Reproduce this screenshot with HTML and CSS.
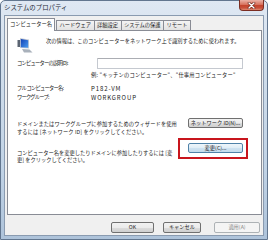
FILE: index.html
```html
<!DOCTYPE html>
<html lang="ja">
<head>
  <meta charset="UTF-8">
  <title>システムのプロパティ</title>
  <link rel="stylesheet" href="styles.css">
</head>
<body>
  <div class="window">
    <div class="titlebar">
      <span class="title">システムのプロパティ</span>
      <div class="close-btn">
        <svg width="9" height="7" viewBox="0 0 9 7">
          <path d="M2 1 L7 6 M7 1 L2 6" stroke="#6b2418" stroke-width="2.6" stroke-linecap="round"/>
          <path d="M2 1 L7 6 M7 1 L2 6" stroke="#fff" stroke-width="1.4" stroke-linecap="round"/>
        </svg>
      </div>
    </div>

    <div class="client">
      <div class="tabs">
        <div class="tab active">コンピューター名</div>
        <div class="tab">ハードウェア</div>
        <div class="tab">詳細設定</div>
        <div class="tab">システムの保護</div>
        <div class="tab">リモート</div>
      </div>

      <div class="panel">
        <div class="intro">
          <svg class="pc-icon" width="16" height="16" viewBox="0 0 16 16">
            <defs>
              <linearGradient id="scr" x1="0" y1="0" x2="1" y2="1">
                <stop offset="0" stop-color="#0f3fb5"/>
                <stop offset="1" stop-color="#4b9cf0"/>
              </linearGradient>
            </defs>
            <rect x="0.5" y="3" width="2.5" height="7" fill="#5b6472"/>
            <polygon points="3,1 12,2.5 12,11.5 3,11" fill="#c9ced6"/>
            <polygon points="3.8,1.9 11.2,3.2 11.2,10.7 3.8,10.2" fill="url(#scr)"/>
            <polygon points="5,12 12.5,12.5 15.5,15.5 7,15.5" fill="#a9b1bb"/>
          </svg>
          <p>次の情報は、このコンピューターをネットワーク上で識別するために使われます。</p>
        </div>

        <div class="field desc">
          <span class="label">コンピューターの説明(D):</span>
          <div class="textbox"></div>
        </div>
        <div class="field example">
          <span class="label"></span>
          <span class="hint">例: "キッチンのコンピューター"、"仕事用コンピューター"</span>
        </div>
        <div class="field fullname">
          <span class="label">フル コンピューター名:</span>
          <span class="value">P182-VM</span>
        </div>
        <div class="field workgroup">
          <span class="label">ワークグループ:</span>
          <span class="value">WORKGROUP</span>
        </div>

        <div class="action network">
          <p>ドメインまたはワークグループに参加するためのウィザードを使用<br>するには [ネットワーク ID] をクリックしてください。</p>
          <button class="btn">ネットワーク ID(N)...</button>
        </div>
        <div class="action change">
          <p>コンピューター名を変更したりドメインに参加したりするには [変<br>更] をクリックしてください。</p>
          <button class="btn default highlight">変更(C)...</button>
        </div>
      </div>

      <div class="footer">
        <button class="btn ok">OK</button>
        <button class="btn cancel">キャンセル</button>
        <button class="btn apply" disabled>適用(A)</button>
      </div>
    </div>
  </div>
</body>
</html>
```

FILE: styles.css
```css
* {
  box-sizing: border-box;
}

body {
  margin: 0;
  background: #fff;
  font-family: "Noto Sans CJK JP", sans-serif;
  font-size: 5.25px;
  color: #222;
}

p {
  margin: 0;
  white-space: nowrap;
}

.window {
  width: 268px;
  height: 240px;
  display: flex;
  flex-direction: column;
  padding: 0 3px 3px;
  border: 1px solid #62768f;
  border-radius: 5px 5px 0 0;
  background: linear-gradient(to bottom, #dfe8f3 0%, #d0ddeb 30%, #c1d3e6 70%, #aec3da 100%);
}

.titlebar {
  height: 14px;
  display: flex;
  align-items: flex-start;
}

.title {
  margin-top: 3px;
  font-size: 6.4px;
  line-height: 8px;
  color: #1f2a38;
}

.close-btn {
  margin: -1px 0 0 auto;
  width: 25px;
  height: 11px;
  border: 1px solid #7b2d22;
  border-top: none;
  border-radius: 0 0 4px 4px;
  background: linear-gradient(to bottom, #ebb2a6 0%, #d8735f 45%, #c3432c 52%, #c9503a 80%, #e08c73 100%);
  display: flex;
  align-items: center;
  justify-content: center;
}

.client {
  flex: 1;
  display: flex;
  flex-direction: column;
  background: #f0f0f0;
  border: 1px solid #8a9bb0;
  padding: 2px 1px 2px 2px;
}

/* tabs */
.tabs {
  display: flex;
  align-items: flex-end;
  height: 12px;
}

.tab {
  height: 10px;
  line-height: 9px;
  padding: 0 2.5px;
  margin-right: -1px;
  border: 1px solid #898c95;
  border-bottom: none;
  background: linear-gradient(to bottom, #f4f4f4, #e2e2e2);
  white-space: nowrap;
}

.tab.active {
  position: relative;
  z-index: 1;
  height: 13px;
  line-height: 11px;
  margin-bottom: -1px;
  margin-right: 1px;
  padding: 0 2px;
  background: #fff;
}

/* page */
.panel {
  flex: 1;
  background: #fff;
  border: 1px solid #898c95;
  padding: 6px 18px 0 9px;
  display: flex;
  flex-direction: column;
  line-height: 7.5px;
}

.intro {
  display: flex;
  align-items: flex-start;
  gap: 13px;
}

.intro p {
  padding-top: 1px;
}

.pc-icon {
  flex: none;
}

.field {
  display: flex;
  align-items: center;
  white-space: nowrap;
}

.label {
  width: 74px;
  flex: none;
  letter-spacing: -0.75px;
}

.desc {
  margin-top: 5px;
}

.textbox {
  margin-left: 6px;
  width: 146px;
  height: 11px;
  background: #fff;
  border: 1px solid #c5c9d0;
  border-top-color: #abadb3;
  border-radius: 1px;
}

.example {
  margin-top: 3px;
}

.hint {
  letter-spacing: 0.2px;
}

.fullname {
  margin-top: 5px;
}

.workgroup {
  margin-top: 1.5px;
}

.value {
  font-size: 6px;
  letter-spacing: 0.9px;
}

.action {
  display: flex;
  align-items: flex-start;
  justify-content: space-between;
}

.action.network {
  margin-top: 17px;
}

.action.network p {
  padding-top: 3px;
  letter-spacing: 0.1px;
}

.action.change {
  margin-top: 2px;
}

.action.change p {
  padding-top: 11.5px;
}

.action.change .btn {
  margin-top: 5px;
}

/* buttons */
.btn {
  height: 10px;
  width: 55px;
  padding: 0;
  font: inherit;
  line-height: 8px;
  color: #222;
  text-align: center;
  white-space: nowrap;
  border: 1px solid #707070;
  border-radius: 2px;
  background: linear-gradient(to bottom, #f2f2f2 0%, #ebebeb 50%, #dddddd 51%, #cfcfcf 100%);
}

.btn.default {
  border-color: #4f82a8;
  background: linear-gradient(to bottom, #eef6fb 0%, #dfedf6 50%, #cfe3f1 51%, #c3dbec 100%);
}

.highlight {
  position: relative;
  overflow: visible;
}

.highlight::after {
  content: "";
  position: absolute;
  left: -11px;
  right: -6px;
  top: -6px;
  bottom: -7px;
  border: 2px solid #c8151d;
}

.footer {
  display: flex;
  justify-content: flex-end;
  margin-top: 7px;
  padding-right: 2px;
}

.footer .btn {
  height: 11px;
  line-height: 9px;
}

.btn.ok {
  width: 43px;
}

.btn.cancel {
  width: 38px;
  margin-left: 9px;
}

.btn.apply {
  width: 46px;
  margin-left: 13px;
  color: #8a8a8a;
  border-color: #adb2b5;
  background: #f4f4f4;
}
```
